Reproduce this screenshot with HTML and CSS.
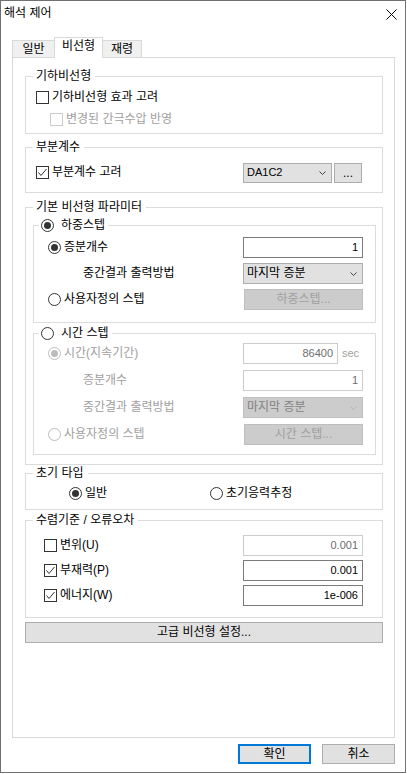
FILE: index.html
```html
<!DOCTYPE html>
<html lang="ko">
<head>
  <meta charset="UTF-8">
  <title>해석 제어</title>
  <link rel="stylesheet" href="styles.css">
</head>
<body>
  <div class="window">
    <div class="titlebar">
      <span class="title">해석 제어</span>
      <svg class="close" width="11" height="11" viewBox="0 0 11 11"><path d="M0.5 0.5L10.5 10.5M10.5 0.5L0.5 10.5" stroke="#000" stroke-width="1" fill="none"/></svg>
    </div>

    <div class="tabs">
      <div class="tab first">일반</div>
      <div class="tab active">비선형</div>
      <div class="tab last">재령</div>
    </div>

    <div class="page">
      <!-- geometric nonlinearity -->
      <fieldset class="group">
        <legend>기하비선형</legend>
        <div class="content geo">
          <div class="row short"><span class="check"></span><span class="lbl">기하비선형 효과 고려</span></div>
          <div class="row short sub off"><span class="check"></span><span class="lbl">변경된 간극수압 반영</span></div>
        </div>
      </fieldset>

      <!-- partial factors -->
      <fieldset class="group">
        <legend>부분계수</legend>
        <div class="content partial">
          <div class="row">
            <span class="check on"><svg viewBox="0 0 11 11"><path d="M1.5 5.5L4 8.5L9.5 2" stroke="#333" stroke-width="1" fill="none"/></svg></span>
            <span class="lbl">부분계수 고려</span>
            <div class="combo small">DA1C2<svg class="chev" viewBox="0 0 7 4"><path d="M0.5 0.5L3.5 3.5L6.5 0.5" stroke="#444" fill="none"/></svg></div>
            <button class="btn dots">...</button>
          </div>
        </div>
      </fieldset>

      <!-- basic nonlinear parameters -->
      <fieldset class="group">
        <legend>기본 비선형 파라미터</legend>
        <div class="content basic">
          <fieldset class="subgroup">
            <legend><span class="radio on"></span><span class="lbl">하중스텝</span></legend>
            <div class="content load">
              <div class="row">
                <span class="radio on"></span><span class="lbl">증분개수</span>
                <div class="field">1</div>
              </div>
              <div class="row">
                <span class="lbl indent">중간결과 출력방법</span>
                <div class="combo">마지막 증분<svg class="chev" viewBox="0 0 7 4"><path d="M0.5 0.5L3.5 3.5L6.5 0.5" stroke="#444" fill="none"/></svg></div>
              </div>
              <div class="row">
                <span class="radio"></span><span class="lbl">사용자정의 스텝</span>
                <button class="btn side" disabled>하중스텝...</button>
              </div>
            </div>
          </fieldset>

          <fieldset class="subgroup">
            <legend><span class="radio"></span><span class="lbl">시간 스텝</span></legend>
            <div class="content time off">
              <div class="row">
                <span class="radio on"></span><span class="lbl">시간(지속기간)</span>
                <div class="unit"><div class="field">86400</div><span class="sec">sec</span></div>
              </div>
              <div class="row">
                <span class="lbl indent">증분개수</span>
                <div class="field">1</div>
              </div>
              <div class="row">
                <span class="lbl indent">중간결과 출력방법</span>
                <div class="combo">마지막 증분<svg class="chev" viewBox="0 0 7 4"><path d="M0.5 0.5L3.5 3.5L6.5 0.5" stroke="#b5b5b5" fill="none"/></svg></div>
              </div>
              <div class="row">
                <span class="radio"></span><span class="lbl">사용자정의 스텝</span>
                <button class="btn side" disabled>시간 스텝...</button>
              </div>
            </div>
          </fieldset>
        </div>
      </fieldset>

      <!-- initial type -->
      <fieldset class="group">
        <legend>초기 타입</legend>
        <div class="content init">
          <div class="row">
            <span class="opt wide"><span class="radio on"></span><span class="lbl">일반</span></span>
            <span class="opt"><span class="radio"></span><span class="lbl">초기응력추정</span></span>
          </div>
        </div>
      </fieldset>

      <!-- convergence -->
      <fieldset class="group">
        <legend>수렴기준 / 오류오차</legend>
        <div class="content conv">
          <div class="row">
            <span class="check"></span><span class="lbl">변위(U)</span>
            <div class="field dim">0.001</div>
          </div>
          <div class="row">
            <span class="check on"><svg viewBox="0 0 11 11"><path d="M1.5 5.5L4 8.5L9.5 2" stroke="#333" stroke-width="1" fill="none"/></svg></span>
            <span class="lbl">부재력(P)</span>
            <div class="field">0.001</div>
          </div>
          <div class="row">
            <span class="check on"><svg viewBox="0 0 11 11"><path d="M1.5 5.5L4 8.5L9.5 2" stroke="#333" stroke-width="1" fill="none"/></svg></span>
            <span class="lbl">에너지(W)</span>
            <div class="field">1e-006</div>
          </div>
        </div>
      </fieldset>

      <button class="btn advanced">고급 비선형 설정...</button>
    </div>

    <div class="actions">
      <button class="btn default">확인</button>
      <button class="btn">취소</button>
    </div>
  </div>
</body>
</html>
```

FILE: styles.css
```css
body {
  margin: 0;
  background: #ffffff;
  color: #000000;
  font: 12px/15px "Liberation Sans", "Noto Sans CJK KR", sans-serif;
}
.window {
  width: 406px;
  height: 773px;
  box-sizing: border-box;
  border: 1px solid #707070;
  background: #ffffff;
}
.titlebar {
  height: 30px;
  display: flex;
  align-items: center;
  justify-content: space-between;
  padding: 0 8px 0 3px;
}
.title {
  margin-top: -6px;
}
.close {
  margin-top: -4px;
}

/* tabs */
.tabs {
  display: flex;
  align-items: flex-end;
  height: 20px;
  margin: 6px 0 0 11px;
}
.tab {
  height: 17px;
  box-sizing: border-box;
  border: 1px solid #d9d9d9;
  border-bottom: none;
  background: #f0f0f0;
  text-align: center;
  line-height: 16px;
}
.tab.first {
  width: 43px;
}
.tab.active {
  width: 49px;
  height: 21px;
  margin: 0 0 -1px -1px;
  background: #ffffff;
  line-height: 16px;
  position: relative;
  z-index: 1;
}
.tab.last {
  width: 40px;
  margin-left: -1px;
}
.page {
  width: 383px;
  height: 681px;
  box-sizing: border-box;
  margin-left: 11px;
  border: 1px solid #d9d9d9;
  background: #ffffff;
  padding-top: 11px;
}

/* group boxes */
fieldset {
  margin: 0;
  padding: 0;
  border: 1px solid #dcdcdc;
  min-inline-size: 0;
}
.group {
  margin: 0 11px 6px 12px;
}
legend {
  padding: 0 4px 0 3px;
  margin-left: 7px;
  line-height: 15px;
}
.subgroup legend {
  display: flex;
  align-items: center;
  gap: 7px;
  height: 15px;
  margin-left: 5px;
  padding: 0 3px 0 2px;
}
.content {
  display: flex;
  flex-direction: column;
}
.content.geo {
  gap: 2px;
  padding: 3px 0 4px 10px;
}
.content.partial {
  padding: 7px 20px 9px 10px;
}
.content.basic {
  gap: 3px;
  padding: 3px 6px 9px 7px;
}
.content.load {
  gap: 5px;
  padding: 4px 12px 12px 14px;
}
.content.time {
  gap: 6px;
  padding: 2px 12px 9px 14px;
}
.content.init {
  padding: 2px 0 5px 43px;
}
.content.conv {
  gap: 4px;
  padding: 7px 19px 11px 18px;
}

/* spacing between the groups */
.group:nth-of-type(1) { margin-bottom: 6px; }
.group:nth-of-type(2) { margin-bottom: 7px; }
.group:nth-of-type(3) { margin-bottom: 1px; }
.group:nth-of-type(4) { margin-bottom: 3px; }
.group:nth-of-type(5) { margin-bottom: 4px; }

.row {
  display: flex;
  align-items: center;
  height: 21px;
}
.row.short {
  height: 20px;
}
.row.sub {
  padding-left: 14px;
}
.lbl {
  margin-left: 3px;
  white-space: nowrap;
}
.subgroup legend .lbl {
  margin-left: 0;
}
.lbl.indent {
  margin-left: 35px;
}
.off .lbl,
.off .sec {
  color: #a0a0a0;
}
.opt {
  display: flex;
  align-items: center;
}
.opt.wide {
  width: 141px;
}

/* check boxes and radio buttons */
.check {
  flex: none;
  display: inline-flex;
  width: 13px;
  height: 13px;
  box-sizing: border-box;
  border: 1px solid #333333;
  background: #ffffff;
}
.check svg {
  width: 11px;
  height: 11px;
}
.off .check {
  border-color: #cccccc;
}
.radio {
  flex: none;
  display: inline-flex;
  align-items: center;
  justify-content: center;
  width: 13px;
  height: 13px;
  box-sizing: border-box;
  border: 1px solid #333333;
  border-radius: 50%;
  background: #ffffff;
}
.radio.on::after {
  content: "";
  width: 7px;
  height: 7px;
  border-radius: 50%;
  background: #333333;
}
.off .radio {
  border-color: #bcbcbc;
}
.off .radio.on::after {
  background: #bcbcbc;
}

/* edit boxes, combos, buttons */
.field {
  margin-left: auto;
  width: 120px;
  height: 21px;
  box-sizing: border-box;
  border: 1px solid #7a7a7a;
  background: #ffffff;
  padding-right: 4px;
  display: flex;
  align-items: center;
  justify-content: flex-end;
  font-size: 11px;
}
.field.dim,
.off .field {
  border-color: #cccccc;
  color: #6d6d6d;
}
.unit {
  margin-left: auto;
  width: 120px;
  display: flex;
  align-items: center;
  gap: 4px;
}
.unit .field {
  width: 95px;
  margin-left: 0;
}
.sec {
  font-size: 11px;
}
.combo {
  margin-left: auto;
  width: 120px;
  height: 21px;
  box-sizing: border-box;
  border: 1px solid #adadad;
  background: #e1e1e1;
  padding: 0 5px 0 3px;
  display: flex;
  align-items: center;
  justify-content: space-between;
}
.combo.small {
  width: 89px;
  height: 20px;
  font-size: 11px;
}
.off .combo {
  background: #cccccc;
  border-color: #bfbfbf;
  color: #838383;
}
.chev {
  width: 7px;
  height: 4px;
}
.btn {
  font: inherit;
  color: #000000;
  background: #e1e1e1;
  border: 1px solid #adadad;
  padding: 0;
  height: 21px;
  box-sizing: border-box;
}
.btn:disabled {
  background: #cccccc;
  border-color: #bfbfbf;
  color: #a0a0a0;
}
.btn.dots {
  width: 28px;
  height: 20px;
  margin-left: 2px;
  line-height: 12px;
}
.btn.side {
  margin-left: auto;
  width: 119px;
}
.btn.advanced {
  display: block;
  width: 358px;
  margin-left: 12px;
}

/* dialog buttons */
.actions {
  display: flex;
  justify-content: flex-end;
  gap: 11px;
  padding: 6px 10px 0 0;
}
.actions .btn {
  width: 73px;
  height: 20px;
}
.actions .btn.default {
  border: 2px solid #0078d7;
}
```
